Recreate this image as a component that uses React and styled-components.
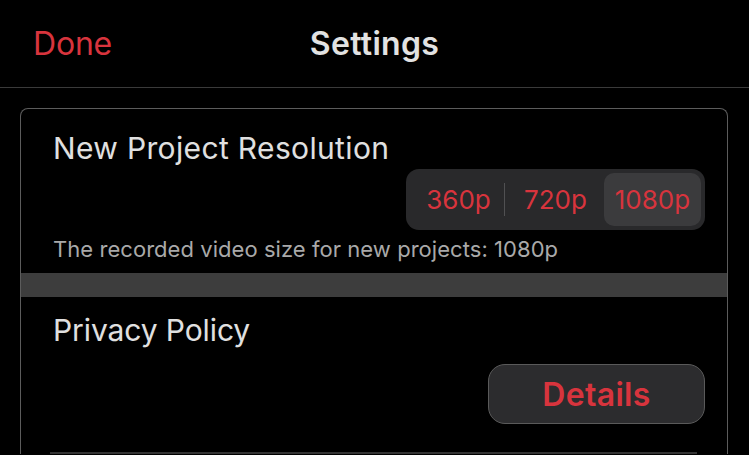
import React, { useState } from "react";
import styled, { createGlobalStyle } from "styled-components";

const Global = createGlobalStyle`
  html, body { margin: 0; padding: 0; background: #000; }
  body { font-family: Inter, "Noto Sans", sans-serif; overflow: hidden; -webkit-font-smoothing: antialiased; }
`;

const RED = "#d8343d";

const Page = styled.div`
  width: 749px;
  height: 455px;
  background: #000;
  overflow: hidden;
`;

const Header = styled.header`
  height: 87px;
  border-bottom: 1px solid #3a3a3a;
  display: grid;
  grid-template-columns: 1fr auto 1fr;
  align-items: center;
`;

const NavButton = styled.button`
  justify-self: start;
  background: none;
  border: none;
  padding: 0 0 0 33px;
  font-family: inherit;
  font-size: 32px;
  color: ${RED};
  letter-spacing: -0.2px;
  cursor: pointer;
`;

const Title = styled.h1`
  margin: 0;
  font-size: 32px;
  font-weight: 600;
  color: #e2e2e2;
  letter-spacing: 0.3px;
`;

const Content = styled.main`
  padding: 20px 21px 0 20px;
`;

const Card = styled.section`
  border: 1px solid #5c5c5c;
  border-bottom: none;
  border-radius: 8px 8px 0 0;
  overflow: hidden;
`;

const Group = styled.div`
  padding: ${(p) => p.$pad};
  display: flex;
  flex-direction: column;
`;

const Label = styled.div`
  font-size: 30px;
  line-height: 36px;
  color: #e0e0e0;
  letter-spacing: ${(p) => p.$ls || 0.35}px;
`;

const ControlRow = styled.div`
  display: flex;
  justify-content: flex-end;
  margin-top: ${(p) => p.$mt}px;
`;

const Segmented = styled.div`
  display: flex;
  width: 299px;
  height: 61px;
  box-sizing: border-box;
  padding: 4px;
  background: #29292b;
  border-radius: 13px;
`;

const Segment = styled.button`
  flex: 1;
  position: relative;
  border: none;
  border-radius: 10px;
  background: ${(p) => (p.$active ? "#3b3b3d" : "transparent")};
  font-family: inherit;
  font-size: 26px;
  color: ${RED};
  cursor: pointer;
  padding: 0;
  &::after {
    content: "";
    display: ${(p) => (p.$divider ? "block" : "none")};
    position: absolute;
    right: 2px;
    top: 10px;
    bottom: 10px;
    width: 1px;
    background: #505052;
  }
`;

const Hint = styled.div`
  margin-top: 6px;
  font-size: 22px;
  line-height: 26px;
  color: #a9a9a9;
  letter-spacing: 0.05px;
`;

const Band = styled.div`
  height: 24px;
  background: #3d3d3d;
`;

const Pill = styled.button`
  width: 217px;
  height: 60px;
  border: 1px solid #5a5a5a;
  border-radius: 17px;
  background: #2c2c2e;
  font-family: inherit;
  font-size: 32px;
  font-weight: 600;
  color: ${RED};
  letter-spacing: 0.3px;
  cursor: pointer;
`;

const Separator = styled.hr`
  margin: 28px 30px 0 29px;
  border: none;
  height: 2px;
  background: #333;
`;

export default function App() {
  const [res, setRes] = useState("1080p");
  const options = ["360p", "720p", "1080p"];
  return (
    <Page>
      <Global />
      <Header>
        <NavButton>Done</NavButton>
        <Title>Settings</Title>
        <div />
      </Header>
      <Content>
        <Card>
          <Group $pad="21px 22px 11px 32px">
            <Label>New Project Resolution</Label>
            <ControlRow $mt={3}>
              <Segmented>
                {options.map((o, i) => {
                  const next = options[i + 1];
                  const divider = next && o !== res && next !== res;
                  return (
                    <Segment key={o} $active={o === res} $divider={divider} onClick={() => setRes(o)}>
                      {o}
                    </Segment>
                  );
                })}
              </Segmented>
            </ControlRow>
            <Hint>The recorded video size for new projects: {res}</Hint>
          </Group>
          <Band />
          <Group $pad="15px 22px 0 32px">
            <Label $ls={-0.1}>Privacy Policy</Label>
            <ControlRow $mt={16}>
              <Pill>Details</Pill>
            </ControlRow>
          </Group>
          <Separator />
        </Card>
      </Content>
    </Page>
  );
}
